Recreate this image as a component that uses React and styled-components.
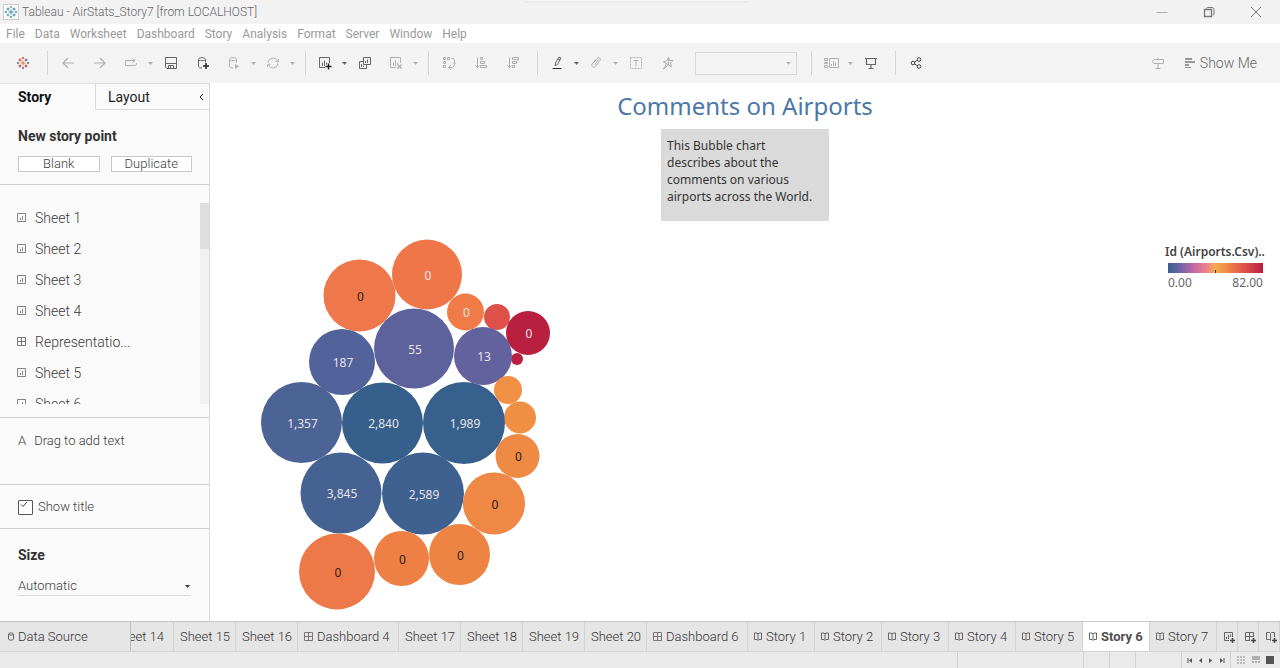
import React from "react";
import styled, { createGlobalStyle, css } from "styled-components";

const ui = `Roboto, "Liberation Sans", sans-serif`;
const book = `"Noto Sans", "Open Sans", sans-serif`;

const GlobalStyle = createGlobalStyle`
  * { box-sizing: border-box; }
  body { margin: 0; background: #fff; font-family: ${ui}; font-weight: 300; color: #3f3f3f; }
  button, select, input { font: inherit; color: inherit; margin: 0; }
  button { padding: 0; border: 0; background: none; }
  svg { display: block; flex: none; }
`;

const Window = styled.div`
  display: flex;
  flex-direction: column;
  min-height: 100vh;
  overflow: hidden;
`;

/* Title bar */
const TitleBar = styled.header`
  position: relative;
  display: flex;
  align-items: center;
  height: 24px;
  padding: 0 1px 0 3px;
  gap: 3px;
  background: #f2f2f2;
  color: #777;
  font: 300 12px/16px ${ui};
`;
const AppBadge = styled.span`
  display: flex;
  padding: 1px;
  background: #fff;
  border: 1px solid #ccc;
`;
const WindowTitle = styled.span`
  flex: 1;
  color: #666;
`;
const WindowButtons = styled.div`
  display: flex;
`;
const WindowButton = styled.button`
  display: flex;
  justify-content: center;
  width: 47px;
`;
const PullTab = styled.span`
  position: absolute;
  top: 0;
  left: 41%;
  width: 225px;
  height: 1px;
  background: #f6f6f6;
  border-radius: 0 0 4px 4px;
  box-shadow: 0 1px 2px #dedede;
`;

const MenuBar = styled.nav`
  display: flex;
  align-items: center;
  gap: 10px;
  height: 19px;
  padding: 0 6px;
  color: #9a9a9a;
  font: 400 12px/18px ${ui};
`;

/* Toolbar */
const Toolbar = styled.div`
  display: flex;
  align-items: center;
  height: 40px;
  padding: 0 7px;
  background: #f3f3f3;
`;
const ToolButton = styled.button`
  display: flex;
  align-items: center;
  justify-content: center;
  width: ${(p) => (p.$split ? 30 : 32)}px;
  height: 24px;
  color: ${(p) => (p.$off ? "#b0b0b0" : "#666")};
`;
const CaretButton = styled(ToolButton)`
  width: 9px;
`;
const ToolDivider = styled.span`
  width: 1px;
  height: 24px;
  margin: 0 4px 0 8px;
  background: #d6d6d6;
`;
const FitBox = styled.div`
  position: relative;
  width: 102px;
  margin: 0 6px 0 11px;
  color: #b4b4b4;
  svg { position: absolute; right: 6px; top: 10px; pointer-events: none; }
`;
const FitSelect = styled.select`
  display: block;
  appearance: none;
  width: 100%;
  height: 23px;
  border: 1px solid #cfcfcf;
  border-radius: 0;
  background: #f5f5f5;
`;
const Spacer = styled.span`
  flex: 1;
`;
const ShowMe = styled.button`
  display: flex;
  align-items: center;
  gap: 5px;
  margin: 0 16px 0 12px;
  color: #666;
  font-size: 14px;
`;

/* Side pane */
const Body = styled.div`
  display: flex;
  flex: 1;
`;
const Side = styled.aside`
  flex: none;
  width: 210px;
  background: #fafafa;
  border-right: 1px solid #d9d9d9;
  font-size: 13px;
  line-height: 16px;
`;
const SideTabs = styled.div`
  display: flex;
  height: 27px;
  font-size: 14px;
`;
const SideTab = styled.button`
  display: flex;
  align-items: center;
  justify-content: space-between;
  text-align: left;
  ${(p) =>
    p.$active
      ? css`width: 95px; padding-left: 18px; font-weight: 700; color: #111;
          border-top: 1px solid #e0e0e0;`
      : css`flex: 1; padding: 0 5px 0 12px; color: #222; font-weight: 400;
          border: 1px solid #d9d9d9; border-right: 0;`}
`;
const Section = styled.section`
  padding: ${(p) => p.$pad};
  border-bottom: ${(p) => (p.$last ? "0" : "1px solid #d0d0d0")};
`;
const Heading = styled.h2`
  margin: 0;
  font-size: 14px;
  line-height: 16px;
  font-weight: 700;
  color: #333;
`;
const ButtonRow = styled.div`
  display: flex;
  gap: 11px;
  margin-top: 12px;
`;
const SmallButton = styled.button`
  flex: 1;
  height: 16px;
  line-height: 14px;
  background: #fff;
  border: 1px solid #c8c8c8;
`;
const SheetScroll = styled.div`
  display: flex;
  height: 202px;
  overflow: hidden;
`;
const SheetList = styled.ul`
  flex: 1;
  margin: 0;
  padding: 0 0 0 17px;
  list-style: none;
  font-size: 14px;
`;
const SheetItem = styled.li`
  display: flex;
  align-items: center;
  gap: 9px;
  height: 31px;
  color: #3a3a3a;
`;
const Track = styled.div`
  width: 9px;
  margin-top: 1px;
  background: #f1f1f1;
`;
const Thumb = styled.div`
  height: 46px;
  background: #dedede;
`;
const TextObject = styled.div`
  display: flex;
  gap: 8px;
  color: #3a3a3a;
`;
const CheckRow = styled.label`
  display: flex;
  align-items: center;
  gap: 5px;
  position: relative;
  svg { position: absolute; left: 2px; top: 2px; pointer-events: none; }
`;
const CheckBox = styled.input`
  appearance: none;
  width: 15px;
  height: 15px;
  border: 1px solid #555;
  border-radius: 1px;
  background: #fff;
`;
const SizeField = styled.div`
  position: relative;
  margin-top: 13px;
  svg { position: absolute; right: 1px; top: 8px; pointer-events: none; }
`;
const SizeSelect = styled.select`
  display: block;
  appearance: none;
  width: 100%;
  height: 19px;
  padding: 0;
  border: 0;
  border-bottom: 1px solid #dcdcdc;
  border-radius: 0;
  background: none;
  color: #3a3a3a;
`;

/* Story canvas */
const Canvas = styled.main`
  flex: 1;
  display: flex;
  flex-direction: column;
  font-family: ${book};
  font-weight: 400;
`;
const StoryTitle = styled.h1`
  margin: 7px 0 7px;
  text-align: center;
  font-size: 24px;
  line-height: 32px;
  font-weight: 400;
  color: #4c78a8;
`;
const Caption = styled.p`
  align-self: center;
  width: 168px;
  height: 92px;
  margin: 0;
  padding: 8px 11px 8px 6px;
  background: #dadada;
  color: #333;
  font-size: 12px;
  line-height: 17px;
`;
const Viz = styled.div`
  display: flex;
  justify-content: space-between;
  padding: 18px 15px 0 51px;
`;
const BubbleText = styled.text`
  font-family: ${book};
  font-size: 12px;
  text-anchor: middle;
  fill: ${(p) => (p.$dark ? "#2a1a14" : "#e6e2ea")};
`;
const Legend = styled.div`
  width: 100px;
  padding-top: 5px;
  font-size: 12px;
  line-height: 16px;
  color: #666;
`;
const LegendTitle = styled.div`
  font-weight: 600;
  color: #444;
  white-space: nowrap;
`;
const LegendBar = styled.div`
  display: flex;
  justify-content: center;
  align-items: flex-end;
  height: 10px;
  margin: 3px 2px 2px 3px;
  background: linear-gradient(90deg, #35608d, #7565a8 14%, #c968a5 28%, #f08683 42%, #f3b04e 50%, #ee8144 64%, #d9484a 84%, #b71d3e);
`;
const LegendTick = styled.span`
  width: 1px;
  height: 3px;
  background: #333;
`;
const LegendRange = styled.div`
  display: flex;
  justify-content: space-between;
  padding: 0 2px 0 3px;
`;

/* Bottom tabs */
const TabBar = styled.nav`
  display: flex;
  height: 31px;
  border-top: 1px solid #c6c6c6;
  border-bottom: 1px solid #d4d4d4;
  background: #e5e5e5;
  font-size: 13px;
`;
const tabWidths = { source: 131, cut: 43, sheet: 62, dashboard: 101, story: 67, add: 21 };
const Tab = styled.button`
  display: flex;
  align-items: center;
  justify-content: ${(p) => (p.$kind === "cut" ? "flex-end" : "flex-start")};
  gap: 4px;
  flex: none;
  width: ${(p) => tabWidths[p.$kind]}px;
  padding: ${(p) => (p.$kind === "cut" ? "0 9px 0 0" : p.$kind === "source" ? "0 8px" : "0 0 0 6px")};
  border-right: 1px solid ${(p) => (p.$kind === "source" ? "#bdbdbd" : "#d2d2d2")};
  overflow: hidden;
  white-space: nowrap;
  background: ${(p) => (p.$active ? "#fff" : "transparent")};
  font-weight: ${(p) => (p.$active ? 700 : 300)};
  color: ${(p) => (p.$active ? "#505050" : "#333")};
`;
const StatusBar = styled.footer`
  display: flex;
  justify-content: flex-end;
  height: 16px;
  background: #eaeaea;
`;
const StatusCell = styled.div`
  display: flex;
  align-items: center;
  justify-content: space-evenly;
  width: ${(p) => p.$w}px;
  border-left: 1px solid #d2d2d2;
`;

/* Icons */
const Icon = ({ w = 14, h = 14, children, ...rest }) => (
  <svg width={w} height={h} viewBox={`0 0 ${w} ${h}`} fill="none" stroke="currentColor" aria-hidden="true" {...rest}>
    {children}
  </svg>
);
const Caret = () => (
  <Icon w={5} h={3} stroke="none" fill="currentColor"><path d="M0 0h5L2.5 3z" /></Icon>
);
const Logo = ({ colors }) => (
  <Icon w={12} h={12}>
    <path stroke={colors[0]} d="M6 3.5v5M3.5 6h5" />
    <path stroke={colors[1]} d="M3 1.5v3M1.5 3h3M9 7.5v3M7.500 9h3" />
    <path stroke={colors[2]} d="M3 7.500v3M1.500 9h3M6 0v2M5 1h2" />
    <path stroke={colors[3]} d="M9 1.500v3M7.500 3h3M6 10v2M5 11h2M0 6h2M1 5v2M10 6h2M11 5v2" />
  </Icon>
);
const Plus = ({ x, y }) => <path d={`M${x - 3} ${y}h6M${x} ${y - 3}v6`} stroke="#222" strokeWidth="1.5" />;
const Back = () => <Icon><path d="M13 7H2M7 2L2 7l5 5" strokeWidth="1.2" /></Icon>;
const Forward = () => <Icon><path d="M1 7h11M7 2l5 5-5 5" strokeWidth="1.2" /></Icon>;
const Redo = () => <Icon><path d="M11 4.500H1.500v5H11c1.500 0 1.500-1.500 1.500-2.500M8.500 2.500l2.500 2-2.500 2" /></Icon>;
const Save = () => <Icon stroke="#555"><path d="M1.500 1.500h11v11H3l-1.500-1.500zM2 7.500h10M4.500 12.500v-3h5v3M6.500 10v2" strokeWidth=".9" /></Icon>;
const cyl = "M2.500 3.500v7c0 1 1.500 1.500 3.500 1.500M9.500 3.500v3M2.500 3.500c0-2.500 7-2.500 7 0c0 1.500-7 1.500-7 0";
const DataAdd = () => <Icon><path d={cyl} /><Plus x={10} y={10} /></Icon>;
const DataRun = () => <Icon><path d={cyl} /><path d="M8 8v5l4-2.500z" fill="currentColor" stroke="none" /></Icon>;
const Refresh = () => <Icon><path d="M2 6.500A5 5 0 0 1 11.500 5M12 7.500A5 5 0 0 1 2.500 9M9.500 5.500l2.500.5.500-3M4.500 8.500L2 8l-.5 3" /></Icon>;
const ChartBox = ({ mark }) => (
  <Icon>
    <path d="M7 11.500H1.500v-10h10V7" />
    <path d="M4.500 10V6.500M6.500 10V4.500M8.500 8.500v-2" />
    {mark === "add" ? <Plus x={10.500} y={10.500} /> : <path d="M8.500 8.500l4 4M12.500 8.500l-4 4" strokeWidth="1.300" />}
  </Icon>
);
const Duplicate = () => (
  <Icon><path d="M5.500 1.500h7v7h-7zM5 5.500H1.500v7h7V9M7.500 7V5M9.500 7V3.500M3.500 11V8M5.500 11v-1.500" /></Icon>
);
const Swap = () => (
  <Icon><path d="M1.500 1.500h2v2h-2zM5.500 1.500h2v2h-2zM1.500 5.500h2v2h-2zM1.500 9.500h2v2h-2zM9 2.500h1.500a2 2 0 0 1 2 2V8c0 2-1.500 3.500-3.500 3.500H7M9 9l-2.500 2.500L9 13.500M11 6.500L12.500 8 14 6.500" /></Icon>
);
const SortAsc = () => <Icon><path d="M3.500 1.500v10M1.500 9.500l2 2 2-2M6.500 1.500h2v2h-2zM6.500 5.500h4v2h-4zM6.500 9.500h6v2h-6z" /></Icon>;
const SortDesc = () => <Icon><path d="M3.500 1.500v10M1.500 9.500l2 2 2-2M6.500 1.500h6v2h-6zM6.500 5.500h4v2h-4zM6.500 9.500h2v2h-2z" /></Icon>;
const Pen = () => <Icon><path d="M5 9.500l.5-2.500 3.500-6 2 1-3.500 6.500zM8 3l2 1" /><path d="M2.500 12.500h9" stroke="#333" /></Icon>;
const Clip = () => <Icon><path d="M4 7.500L8 2.500c1.500-2 4.500 0 3 2L6.500 10.500c-1.500 2-5 0-3.500-2.500L6.500 4M5.500 9l4-5.500" /></Icon>;
const TextBox = () => <Icon><path d="M1.500 1.500h11v11h-11z" strokeDasharray="2 1" /><path d="M4.500 4.500h5M7 4.500v6" /></Icon>;
const Pin = () => <Icon><path d="M7.500 1l1 3.500 3.500 0-2.500 2.500 1 3.500-3-1.500zM7.500 1L6 4.500 2.500 6l3 1.500L2.500 13l5-4M5.500 7.500l2 1.500" /></Icon>;
const Cards = () => (
  <Icon w={15}><path d="M5.500 2.500h9v9h-9zM7.500 10V8M9.500 10V5M11.500 10V6.500M.5 2.500h3v2h-3zM.5 6.500h3v1h-3zM.5 9.500h3v2h-3z" /></Icon>
);
const Present = () => <Icon><path d="M1 2.500h12M2.500 3v5.500h9V3M7 8.500v4M4.500 12.500h5" strokeWidth="1.200" /></Icon>;
const Share = () => (
  <Icon stroke="#444"><circle cx="4" cy="7" r="1.800" /><circle cx="10" cy="3.500" r="1.800" /><circle cx="10" cy="10.500" r="1.800" /><path d="M5.500 6L8.500 4.300M5.500 8l3 1.700" /></Icon>
);
const Signpost = () => <Icon><path d="M3 3.500h9.500v4H3L1.500 5.500zM7 1.500v2M7 7.500v5M4.500 12.500h5" /></Icon>;
const ShowMeIcon = () => (
  <Icon w={10} h={12} stroke="none" fill="#999"><path d="M0 1h7v2H0zM0 4h10v2H0zM0 7h4v2H0zM0 10h6v1H0z" /></Icon>
);
const SheetIcon = () => <Icon w={9} h={9} stroke="#777"><path d="M.5.5h8v8h-8zM3.500 7V5M5.500 7V3" strokeWidth=".9" /></Icon>;
const GridIcon = () => <Icon w={9} h={9} stroke="#777"><path d="M.5.5h8v8h-8zM4.500.5v8M.5 4.500h8" /></Icon>;
const BookIcon = () => <Icon w={8} h={9} stroke="#666"><path d="M.5 1v6.500H3l1 1 1-1h2.500V1H5L4 2 3 1zM4 2v6" /></Icon>;
const SourceIcon = () => <Icon w={6} h={9} stroke="#666"><path d="M.5 2v5c0 1.500 5 1.500 5 0V2c0-1.500-5-1.500-5 0s5 1.500 5 0" /></Icon>;
const AddTabIcon = ({ kind }) => (
  <Icon w={12} h={12} stroke="#666">
    {kind === "sheet" && <path d="M6 9.500H1.500v-8h8V6M3.500 8V6M5.500 8V4M7.500 6V3.500" />}
    {kind === "dashboard" && <path d="M6 9.500H1.500v-8h8V6M5.500 1.500v8M1.500 5.500h8" />}
    {kind === "story" && <path d="M5.500 9.500l-1-1h-3v-7h3l1 1 1-1h3V6M5.500 2.500v7" />}
    <path d="M9.500 7v5M7 9.500h5" stroke="#444" strokeWidth="1.500" />
  </Icon>
);

const bubbles = [
  [359.5, 295.5, 36, "#ee7849", "0", 1],
  [427, 274.5, 35, "#ee7648", "0"],
  [465.5, 312, 18.5, "#f07b46", "0"],
  [497, 317, 13, "#dd5148"],
  [528, 333, 22, "#b91f3f", "0"],
  [517, 359, 6, "#b91f3f"],
  [342, 362, 33, "#52629a", "187"],
  [414, 348.5, 40, "#5e629c", "55"],
  [483, 356, 29, "#64619f", "13"],
  [508, 390, 14, "#f09044"],
  [520, 417.5, 16, "#ef8f44"],
  [517.5, 456, 22, "#ee8a43", "0", 1],
  [301.5, 422.5, 40.5, "#4c6396", "1,357"],
  [382.5, 423, 40.5, "#36608b", "2,840"],
  [464, 423, 41, "#38608c", "1,989"],
  [341, 493, 40.5, "#466292", "3,845"],
  [423, 493.5, 41, "#3f618f", "2,589"],
  [494, 503.5, 31, "#ee8844", "0", 1],
  [337, 571.5, 38, "#ee7948", "0", 1],
  [401.5, 558.5, 27.5, "#ee8045", "0", 1],
  [459.5, 554.5, 30.5, "#ee8444", "0", 1],
];

const sheets = ["Sheet 1", "Sheet 2", "Sheet 3", "Sheet 4", "Representatio...", "Sheet 5", "Sheet 6"];
const tabs = [
  ["sheet", "Sheet 15"], ["sheet", "Sheet 16"], ["dashboard", "Dashboard 4"], ["sheet", "Sheet 17"],
  ["sheet", "Sheet 18"], ["sheet", "Sheet 19"], ["sheet", "Sheet 20"], ["dashboard", "Dashboard 6"],
  ["story", "Story 1"], ["story", "Story 2"], ["story", "Story 3"], ["story", "Story 4"],
  ["story", "Story 5"], ["story", "Story 6"], ["story", "Story 7"],
];
const menus = ["File", "Data", "Worksheet", "Dashboard", "Story", "Analysis", "Format", "Server", "Window", "Help"];

const tools = [
  ["Start page", <Logo colors={["#e8762c", "#c7433c", "#c7433c", "#5b6591"]} />], "|",
  ["Back", <Back />, "off"], ["Forward", <Forward />, "off"], ["Redo", <Redo />, "off", "menu"],
  ["Save", <Save />], ["New data source", <DataAdd />], ["Auto update", <DataRun />, "off", "menu"],
  ["Refresh", <Refresh />, "off", "menu"], "|",
  ["New worksheet", <ChartBox mark="add" />, "", "menu"], ["Duplicate sheet", <Duplicate />],
  ["Clear sheet", <ChartBox mark="clear" />, "off", "menu"], "|",
  ["Swap rows and columns", <Swap />, "off"], ["Sort ascending", <SortAsc />, "off"],
  ["Sort descending", <SortDesc />, "off"], "|",
  ["Highlight", <Pen />, "", "menu"], ["Group members", <Clip />, "off", "menu"],
  ["Show mark labels", <TextBox />, "off"], ["Fix axes", <Pin />, "off"], "fit", "|",
  ["Show cards", <Cards />, "off", "menu"], ["Presentation mode", <Present />], "|",
  ["Share", <Share />],
];

function ToolItem({ item }) {
  if (item === "|") return <ToolDivider />;
  if (item === "fit")
    return (
      <FitBox>
        <FitSelect aria-label="Fit" disabled><option></option></FitSelect>
        <Caret />
      </FitBox>
    );
  const [label, icon, state, menu] = item;
  const off = state === "off";
  return (
    <>
      <ToolButton aria-label={label} $off={off} $split={!!menu}>{icon}</ToolButton>
      {menu && <CaretButton aria-label={`${label} options`} $off={off}><Caret /></CaretButton>}
    </>
  );
}

export default function App() {
  return (
    <Window>
      <GlobalStyle />
      <TitleBar>
        <PullTab />
        <AppBadge><Logo colors={["#3f87ad", "#3f87ad", "#5b9dbd", "#3f87ad"]} /></AppBadge>
        <WindowTitle>Tableau - AirStats_Story7 [from LOCALHOST]</WindowTitle>
        <WindowButtons>
          <WindowButton aria-label="Minimize"><Icon w={12} h={12} stroke="#aaa"><path d="M.5 6.500h11" /></Icon></WindowButton>
          <WindowButton aria-label="Restore">
            <Icon w={12} h={12}><path d="M1.500 3.500h7v7h-7z" strokeWidth="1.300" /><path d="M3.500 3V2.500a1 1 0 0 1 1-1H9a2 2 0 0 1 2 2V8a1 1 0 0 1-1 1h-.5" /></Icon>
          </WindowButton>
          <WindowButton aria-label="Close"><Icon w={12} h={12}><path d="M1 1l10 10M11 1L1 11" /></Icon></WindowButton>
        </WindowButtons>
      </TitleBar>
      <MenuBar>{menus.map((m) => <button key={m}>{m}</button>)}</MenuBar>
      <Toolbar>
        {tools.map((t, i) => <ToolItem key={i} item={t} />)}
        <Spacer />
        <ToolButton aria-label="Data guide" $off $split><Signpost /></ToolButton>
        <ShowMe><ShowMeIcon />Show Me</ShowMe>
      </Toolbar>

      <Body>
        <Side>
          <SideTabs>
            <SideTab $active>Story</SideTab>
            <SideTab>Layout<Icon w={5} h={8}><path d="M4 1L1 4l3 3" /></Icon></SideTab>
          </SideTabs>
          <Section $pad="18px 17px 12px 18px">
            <Heading>New story point</Heading>
            <ButtonRow>
              <SmallButton>Blank</SmallButton>
              <SmallButton>Duplicate</SmallButton>
            </ButtonRow>
          </Section>
          <Section $pad="17px 0 13px">
            <SheetScroll>
              <SheetList>
                {sheets.map((s) => (
                  <SheetItem key={s}>{s.startsWith("Sheet") ? <SheetIcon /> : <GridIcon />}{s}</SheetItem>
                ))}
              </SheetList>
              <Track><Thumb /></Track>
            </SheetScroll>
          </Section>
          <Section $pad="15px 18px 35px">
            <TextObject><span>A</span><span>Drag to add text</span></TextObject>
          </Section>
          <Section $pad="14px 18px 13px">
            <CheckRow>
              <CheckBox type="checkbox" defaultChecked />
              <Icon w={8} h={7}><path d="M1 3.500L3 5.500 7 1" /></Icon>
              Show title
            </CheckRow>
          </Section>
          <Section $pad="18px 18px 20px" $last>
            <Heading as="label" htmlFor="size">Size</Heading>
            <SizeField>
              <SizeSelect id="size"><option>Automatic</option></SizeSelect>
              <Caret />
            </SizeField>
          </Section>
        </Side>

        <Canvas>
          <StoryTitle>Comments on Airports</StoryTitle>
          <Caption>This Bubble chart describes about the comments on various airports across the World.</Caption>
          <Viz>
            <svg width="290" height="372" viewBox="261 239 290 372" role="img" aria-label="Airport comments">
              {bubbles.map(([x, y, r, fill, label, dark], i) => (
                <g key={i}>
                  <circle cx={x} cy={y} r={r} fill={fill} />
                  {label && <BubbleText x={x + 1} y={y + 5} $dark={dark}>{label}</BubbleText>}
                </g>
              ))}
            </svg>
            <Legend>
              <LegendTitle>Id (Airports.Csv)..</LegendTitle>
              <LegendBar><LegendTick /></LegendBar>
              <LegendRange><span>0.00</span><span>82.00</span></LegendRange>
            </Legend>
          </Viz>
        </Canvas>
      </Body>

      <TabBar>
        <Tab $kind="source"><SourceIcon />Data Source</Tab>
        <Tab $kind="cut">Sheet 14</Tab>
        {tabs.map(([kind, name]) => (
          <Tab key={name} $kind={kind} $active={name === "Story 6"}>
            {kind === "dashboard" && <GridIcon />}
            {kind === "story" && <BookIcon />}
            {name}
          </Tab>
        ))}
        <Tab $kind="add" aria-label="New worksheet"><AddTabIcon kind="sheet" /></Tab>
        <Tab $kind="add" aria-label="New dashboard"><AddTabIcon kind="dashboard" /></Tab>
        <Tab $kind="add" aria-label="New story"><AddTabIcon kind="story" /></Tab>
      </TabBar>
      <StatusBar>
        <StatusCell $w={126} />
        <StatusCell $w={26} />
        <StatusCell $w={26} />
        <StatusCell $w={46} />
        <StatusCell $w={49}>
          {["M1 1v5M5 1L2 3.500 5 6z", "M4 1L1 3.500 4 6z", "M1 1l3 2.500L1 6z", "M5 1v5M1 1l3 2.500L1 6z"].map((d) => (
            <button key={d} aria-label="Navigate tabs"><Icon w={6} h={7} stroke="none" fill="#555"><path d={d} /><path d={d.includes("v5") ? d.slice(0, 6) : ""} stroke="#555" /></Icon></button>
          ))}
        </StatusCell>
        <StatusCell $w={50}>
          <button aria-label="Sheet sorter"><Icon w={8} h={8} stroke="#bbb" strokeWidth="2"><path d="M0 1h8M0 4h8M0 7h8" strokeDasharray="2 1" /></Icon></button>
          <button aria-label="Filmstrip"><Icon w={8} h={8} stroke="none" fill="#b0b0b0"><path d="M0 0h8v4H0zM0 5h2v2H0zM3 5h2v2H3zM6 5h2v2H6z" /></Icon></button>
          <button aria-label="Tabs"><Icon w={8} h={8} stroke="none" fill="#555"><path d="M0 0h8v8H0z" /></Icon></button>
        </StatusCell>
      </StatusBar>
    </Window>
  );
}
